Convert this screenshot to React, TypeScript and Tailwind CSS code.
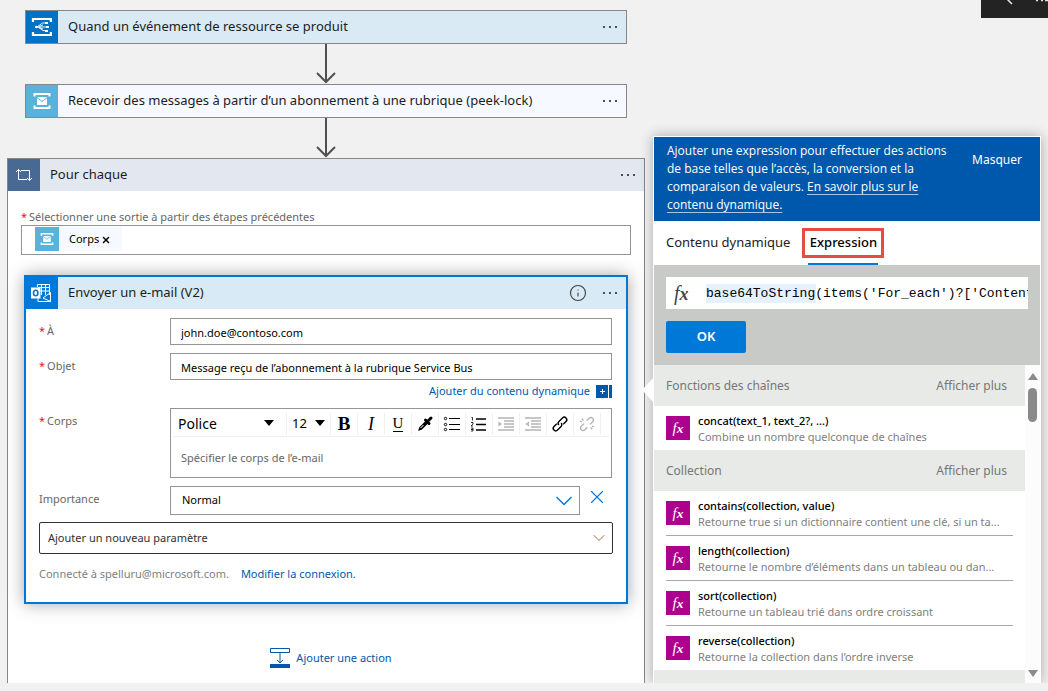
import React from "react";
import { ChevronDown, Info, X } from "lucide-react";

function ServiceBusIcon({ className }: { className: string }) {
  return (
    <svg viewBox="0 0 24 24" className={className} fill="none" aria-hidden="true">
      <path d="M4.500 7.500V5H19.500V7.500M4.500 16.500V19H19.500V16.500" stroke="#fff" strokeWidth="2" />
      <rect x="7" y="8" width="10" height="8" fill="#fff" />
      <path d="M7 8.500L12 12.500L17 8.500" stroke="#59b2d9" strokeWidth="1" />
    </svg>
  );
}

function EventGridIcon() {
  return (
    <svg viewBox="0 0 24 24" className="size-6" fill="none" stroke="#fff" aria-hidden="true">
      <path d="M4 7V4H20V7M4 17V20H20V17" strokeWidth="2" transform="translate(-1.500 0) scale(1.120 1)" />
      <path d="M5 12H16M7 12L12.500 8H16M8 12L13 15.500H16M9 11.500L13 10M9 12.500L13 14" strokeWidth="0.900" />
      <path d="M15 7h3v2h-3zM16 11h3v2h-3zM15 15h3v2h-3z" fill="#fff" stroke="none" />
      <circle cx="6.500" cy="12" r="1.300" fill="#fff" stroke="none" />
    </svg>
  );
}

function OutlookIcon() {
  return (
    <svg viewBox="0 0 24 24" className="size-6" fill="none" stroke="#fff" aria-hidden="true">
      <path d="M7.500 6V3.500H19.500V14" />
      <path d="M8 6.500H19.500M11.500 4V14M15.500 4V14M8 10H19.500" />
      <path d="M8 17V20.500H20.500V11.500L13 17L20.500 20.500" />
      <rect x="1" y="6.500" width="9.500" height="11" fill="#fff" stroke="none" />
      <ellipse cx="5.700" cy="12" rx="2.200" ry="2.700" stroke="#0078d7" strokeWidth="1.600" />
    </svg>
  );
}

function LoopIcon() {
  return (
    <svg viewBox="0 0 18 14" className="h-3.5 w-[18px]" fill="none" stroke="#fff" aria-hidden="true">
      <path d="M3.500 1.500V11.500H12M1 4L3.500 1.500L6 4M6 2.500H14.500V12.500M12 10L14.500 12.500L17 10" />
    </svg>
  );
}

function Arrow() {
  return (
    <div className="flex justify-center">
      <svg viewBox="0 0 20 40" className="h-10 w-5" fill="none" stroke="#505050" strokeWidth="2" aria-hidden="true">
        <path d="M10 0V38M1 29L10 38L19 29" />
      </svg>
    </div>
  );
}

function Dots() {
  return (
    <button aria-label="Menu" className="flex gap-1 p-1">
      <i className="size-0.5 bg-[#484f5c]" />
      <i className="size-0.5 bg-[#484f5c]" />
      <i className="size-0.5 bg-[#484f5c]" />
    </button>
  );
}

function StepCard({ icon, iconClass, title, className }: { icon: React.ReactNode; iconClass: string; title: string; className: string }) {
  return (
    <div className={`mx-[18px] flex h-[34px] items-center border border-[#8a8589] pr-[5px] ${className}`}>
      <span className={`flex h-full w-8 items-center justify-center ${iconClass}`}>{icon}</span>
      <h2 className="flex-1 pl-2.5 text-[13px]">{title}</h2>
      <Dots />
    </div>
  );
}

function Star() {
  return <span className="mr-0.5 text-[#e81123]">*</span>;
}

function Tool({ label, faded, children }: { label: string; faded?: boolean; children: React.ReactNode }) {
  return (
    <button
      aria-label={label}
      className={`flex h-[22px] w-[27px] items-center justify-center border-r border-[#f0f0f0] ${faded ? "text-[#b4b4b4]" : "text-black"}`}
    >
      {children}
    </button>
  );
}

function ListIcon({ kind }: { kind: "bullet" | "number" }) {
  return (
    <svg viewBox="0 0 18 16" className="h-4 w-[18px]" fill="none" stroke="currentColor" aria-hidden="true">
      {kind === "bullet" ? (
        <g>
          <path d="M6 2.500H17M6 8.500H17M6 13.500H17" />
          <circle cx="2.500" cy="2.500" r="1.200" />
          <circle cx="2.500" cy="8.500" r="1.200" />
          <circle cx="2.500" cy="13.500" r="1.200" />
        </g>
      ) : (
        <g>
          <path d="M6 3H16M6 8.500H16M6 14H16" strokeWidth="1.600" />
          <path d="M1.500 1.500H2.500V4.500M1 6.500H3V8L1 10H3M1 12H3V15H1M1 13.500H3" strokeWidth="0.800" />
        </g>
      )}
    </svg>
  );
}

function IndentIcon({ flip }: { flip?: boolean }) {
  return (
    <svg viewBox="0 0 18 16" className="h-4 w-[18px]" fill="none" stroke="currentColor" aria-hidden="true">
      <path d="M1 2H17M7 5H17M7 8H17M7 11H17M1 14H17" strokeWidth="1.400" />
      <path d={flip ? "M5 5.500V10.500L1.500 8Z" : "M1.500 5.500V10.500L5 8Z"} fill="currentColor" stroke="none" />
    </svg>
  );
}

function ChainIcon({ broken }: { broken?: boolean }) {
  return (
    <svg viewBox="0 0 18 18" className="size-[18px]" fill="none" stroke="currentColor" strokeWidth="1.400" aria-hidden="true">
      <g transform="rotate(-45 9 9)">
        {broken ? (
          <path d="M7 6.500H3.500A2.500 2.500 0 0 0 3.500 11.500H7M11 6.500H14.500A2.500 2.500 0 0 1 14.500 11.500H11M7 4L6 2M11 14L12 16M9 4V1.500M9 14V16.500" />
        ) : (
          <path d="M7 6.500H3A2.500 2.500 0 0 0 3 11.500H8A2.500 2.500 0 0 0 10.500 9M11 11.500H15A2.500 2.500 0 0 0 15 6.500H10A2.500 2.500 0 0 0 7.500 9" />
        )}
      </g>
    </svg>
  );
}

function Fx({ className }: { className: string }) {
  return (
    <span aria-hidden="true" className={`font-['Liberation_Serif',serif] leading-none italic ${className}`}>
      f<span className="text-[0.9em] font-bold">x</span>
    </span>
  );
}

function Group({ title }: { title: string }) {
  return (
    <div className="flex h-[41px] items-center justify-between bg-[#e8eae7] pt-px pr-[18px] pl-3 text-[12px] text-[#767676]">
      <h3>{title}</h3>
      <button>Afficher plus</button>
    </div>
  );
}

function FunctionList({ items }: { items: string[][] }) {
  return (
    <ul className="divide-y divide-[#a8a8a8] px-3">
      {items.map(([name, description]) => (
        <li key={name} className="flex h-[45px] items-start gap-2 pt-2.5 last:h-11">
          <span className="flex size-6 shrink-0 items-center justify-center bg-[#ad008c] text-white">
            <Fx className="text-[15px]" />
          </span>
          <div className="-mt-[3px] min-w-0 flex-1 text-[11px] leading-4">
            <p className="font-medium text-black">{name}</p>
            <p className="truncate text-[#808080]">{description}</p>
          </div>
        </li>
      ))}
    </ul>
  );
}

const stringFunctions = [["concat(text_1, text_2?, ...)", "Combine un nombre quelconque de chaînes"]];

const collectionFunctions = [
  ["contains(collection, value)", "Retourne true si un dictionnaire contient une clé, si un ta..."],
  ["length(collection)", "Retourne le nombre d’éléments dans un tableau ou dan..."],
  ["sort(collection)", "Retourne un tableau trié dans ordre croissant"],
  ["reverse(collection)", "Retourne la collection dans l’ordre inverse"],
];

function EmailCard() {
  const field = "h-[27px] w-full border border-[#949494] bg-white px-2.5 pt-0.5 text-[11px] text-black";
  const row = "grid grid-cols-[131px_1fr]";
  return (
    <section className="mx-4 mt-5 border-2 border-[#0078d7] bg-white text-[11px] text-[#666] shadow-[0_0_16px_rgba(0,0,0,0.35)]">
      <header className="flex h-8 items-center bg-[#d9eaf7] pr-[5px]">
        <span className="flex h-full w-8 items-center justify-center bg-[#0078d7]">
          <OutlookIcon />
        </span>
        <h2 className="flex-1 pl-2.5 text-[13px] text-[#1c1c1c]">Envoyer un e-mail (V2)</h2>
        <button aria-label="Informations" className="mr-3 text-[#404040]">
          <Info className="size-[18px]" strokeWidth={1.5} />
        </button>
        <Dots />
      </header>
      <div className="pt-[9px] pr-3.5 pb-[19px] pl-[13px]">
        <div className={row}>
          <label htmlFor="to" className="pt-[5px]">
            <Star />À
          </label>
          <input id="to" className={field} defaultValue="john.doe@contoso.com" />
        </div>
        <div className={`mt-2 ${row}`}>
          <label htmlFor="subject" className="pt-[5px]">
            <Star />Objet
          </label>
          <input id="subject" className={field} defaultValue="Message reçu de l’abonnement à la rubrique Service Bus" />
        </div>
        <div className="flex h-[22px] items-center justify-end">
          <a href="#contenu" className="flex items-center gap-1.5 text-[#0058ad]">
            Ajouter du contenu dynamique
            <svg viewBox="0 0 16 13" className="h-[13px] w-4" fill="#0058ad" aria-hidden="true">
              <path d="M0 0H12V13H0ZM13 0H16V13H13Z" />
              <path d="M6.500 4V9M4 6.500H9" stroke="#fff" />
            </svg>
          </a>
        </div>
        <div className={`mt-1.5 ${row}`}>
          <label htmlFor="body" className="pt-[5px]">
            <Star />Corps
          </label>
          <div className="border border-[#949494]">
            <div className="m-0.5 mb-0 flex h-[26px] items-center border-b border-[#f0f0f0] text-black">
              <div className="relative h-[22px] w-[114px] border-r border-[#f0f0f0]">
                <select aria-label="Police" className="h-full w-full appearance-none pl-[5px] text-[14px]">
                  <option>Police</option>
                </select>
                <i className="pointer-events-none absolute top-[7px] right-3 border-x-[5px] border-t-[6px] border-x-transparent border-t-black" />
              </div>
              <div className="relative h-[22px] w-11 border-r border-[#f0f0f0]">
                <select aria-label="Taille" className="h-full w-full appearance-none pl-[5px] text-[13px]">
                  <option>12</option>
                </select>
                <i className="pointer-events-none absolute top-[7px] right-[5px] border-x-[5px] border-t-[6px] border-x-transparent border-t-black" />
              </div>
              <Tool label="Gras">
                <b className="font-['Liberation_Serif',serif] text-[19px] leading-none">B</b>
              </Tool>
              <Tool label="Italique">
                <em className="font-['Liberation_Serif',serif] text-[18px] leading-none">I</em>
              </Tool>
              <Tool label="Souligné">
                <span className="border-b border-black font-['Liberation_Serif',serif] text-[15px] leading-[15px]">U</span>
              </Tool>
              <Tool label="Couleur">
                <svg viewBox="0 0 18 18" className="size-[18px]" aria-hidden="true">
                  <path d="M2 16L3.500 12L10 5.500L12.500 8L6 14.500Z" fill="currentColor" />
                  <path d="M4.500 13L7.500 10" stroke="#fff" />
                  <path d="M9.500 5L13 8.500M11.500 6.500L15 3" stroke="currentColor" strokeWidth="3" strokeLinecap="round" />
                </svg>
              </Tool>
              <Tool label="Liste à puces">
                <ListIcon kind="bullet" />
              </Tool>
              <Tool label="Liste numérotée">
                <ListIcon kind="number" />
              </Tool>
              <Tool label="Augmenter le retrait" faded>
                <IndentIcon />
              </Tool>
              <Tool label="Réduire le retrait" faded>
                <IndentIcon flip />
              </Tool>
              <Tool label="Lien">
                <ChainIcon />
              </Tool>
              <Tool label="Supprimer le lien" faded>
                <ChainIcon broken />
              </Tool>
            </div>
            <textarea
              id="body"
              placeholder="Spécifier le corps de l’e-mail"
              className="block h-10 w-full resize-none px-2.5 pt-[13px] text-[11px] leading-4 placeholder:text-[#666]"
            />
          </div>
        </div>
        <div className="mt-2 grid grid-cols-[131px_1fr_32px]">
          <label htmlFor="importance" className="pt-[5px]">
            Importance
          </label>
          <div className="relative">
            <select id="importance" className="h-[29px] w-full appearance-none border border-[#949494] pl-[11px] text-[11px] text-black">
              <option>Normal</option>
            </select>
            <svg viewBox="0 0 16 10" className="pointer-events-none absolute top-2.5 right-2 h-2.5 w-4" fill="none" stroke="#0078d7" strokeWidth="1.500" aria-hidden="true">
              <path d="M0.500 1L8 8.500L15.500 1" />
            </svg>
          </div>
          <button aria-label="Supprimer" className="flex h-[22px] items-center justify-center pl-0.5 text-[#0078d7]">
            <X className="size-[22px]" strokeWidth={1.2} />
          </button>
        </div>
        <div className="relative mt-[7px] -mr-px">
          <select aria-label="Ajouter un nouveau paramètre" className="block h-8 w-full appearance-none rounded-xs border border-[#323130] pl-2 text-[11px] text-[#323130]">
            <option>Ajouter un nouveau paramètre</option>
          </select>
          <ChevronDown className="pointer-events-none absolute top-1.5 right-1 size-5 text-[#9b6c48]" strokeWidth={1.2} />
        </div>
        <p className="mt-[11px] flex gap-3 leading-[18px] text-[#808080]">
          Connecté à spelluru@microsoft.com.
          <a href="#connexion" className="text-[#0058ad]">
            Modifier la connexion.
          </a>
        </p>
      </div>
    </section>
  );
}

function ExpressionPanel() {
  return (
    <aside className="relative mt-[136px] w-[388px] shrink-0 border border-b-0 border-white bg-white shadow-[0_0_12px_rgba(0,0,0,0.3)]">
      <svg viewBox="0 0 12 26" className="absolute top-[240px] -left-3 h-[26px] w-3" fill="#fff" aria-hidden="true">
        <path d="M12 0V26L0 13Z" />
      </svg>
      <div className="flex h-[84px] justify-between bg-[#0058ad] pt-[5px] pr-[18px] pl-[13px] text-[12px] leading-[18px] text-white">
        <p className="w-[292px] font-['Open_Sans',sans-serif]">
          Ajouter une expression pour effectuer des actions de base telles que l’accès, la conversion et la comparaison de valeurs.{" "}
          <a href="#aide" className="underline decoration-[#a9c4e4] underline-offset-[3px]">
            En savoir plus sur le contenu dynamique.
          </a>
        </p>
        <button className="mt-[9px] self-start">Masquer</button>
      </div>
      <div role="tablist" className="flex h-11 items-start gap-3 pt-[7px] pl-3 text-[13px] text-[#1c1c1c]">
        <button role="tab" aria-selected="false" className="h-[30px]">
          Contenu dynamique
        </button>
        <button role="tab" aria-selected="true" className="relative h-[30px] w-[82px] border-[3px] border-[#e94b43] font-medium text-black">
          Expression
          <i className="absolute -bottom-2.5 left-[3px] h-0.5 w-[70px] bg-[#0078d7]" />
        </button>
      </div>
      <div className="bg-[#c8cac7] p-3">
        <div className="flex h-8 items-center bg-white">
          <Fx className="w-10 pl-2 text-[20px] text-[#444]" />
          <div className="relative flex-1">
            <i className="absolute inset-y-0 left-0 w-[110px] bg-[#e5f1fd]" />
            <input
              aria-label="Expression"
              className="relative block w-full bg-transparent font-['Liberation_Mono',monospace] text-[13px] leading-[19px] text-black"
              defaultValue="base64ToString(items('For_each')?['Content"
            />
          </div>
        </div>
        <button className="mt-3 block h-8 w-20 rounded-xs bg-[#0078d7] text-[13px] font-semibold text-white">OK</button>
      </div>
      <div className="flex">
        <div className="min-w-0 flex-1">
          <Group title="Fonctions des chaînes" />
          <FunctionList items={stringFunctions} />
          <Group title="Collection" />
          <FunctionList items={collectionFunctions} />
          <div className="h-[13px] bg-[#e8eae7]" />
        </div>
        <div className="flex w-[15px] flex-col items-center bg-[#fcfcfc] pt-2 pb-1.5" aria-hidden="true">
          <i className="border-x-[5px] border-b-[7px] border-x-transparent border-b-[#8a8a8a]" />
          <i className="mt-2 h-[34px] w-[9px] rounded-full bg-[#8a8a8a]" />
          <i className="mt-auto border-x-[5px] border-t-[7px] border-x-transparent border-t-[#8a8a8a]" />
        </div>
      </div>
    </aside>
  );
}

export default function App() {
  return (
    <div className="relative min-h-screen bg-[#f1f1f1] pb-2 font-['Noto_Sans',sans-serif] text-[#1c1c1c]">
      <div className="absolute top-0 right-0 h-[18px] w-[67px] bg-[#232323]" aria-hidden="true">
        <svg viewBox="0 0 67 18" className="h-full w-full" fill="none" stroke="#e8e8e8" strokeWidth="1.500">
          <path d="M25 -2L31 4M55 0.500H57M60 0.500H62M64 0.500H67" />
        </svg>
      </div>
      <main className="flex items-stretch gap-2 overflow-hidden px-[7px]">
        <div className="flex min-w-0 flex-1 flex-col pt-2.5">
          <StepCard icon={<EventGridIcon />} iconClass="bg-[#0072c6]" title="Quand un événement de ressource se produit" className="bg-[#d9eaf5]" />
          <Arrow />
          <StepCard
            icon={<ServiceBusIcon className="size-6" />}
            iconClass="bg-[#59b2d9]"
            title="Recevoir des messages à partir d’un abonnement à une rubrique (peek-lock)"
            className="bg-[#f6f9ff]"
          />
          <Arrow />
          <section className="flex flex-1 flex-col border border-b-0 border-[#8a8589] bg-white">
            <header className="flex h-8 items-center bg-[#e3e7ef] pr-[5px]">
              <span className="flex h-full w-8 items-center justify-center bg-[#486991]">
                <LoopIcon />
              </span>
              <h2 className="flex-1 pl-2.5 text-[13px]">Pour chaque</h2>
              <Dots />
            </header>
            <div className="mx-[13px] mt-[18px]">
              <label htmlFor="output" className="block text-[11px] leading-4 text-[#666]">
                <Star />
                Sélectionner une sortie à partir des étapes précédentes
              </label>
              <div className="flex h-[30px] border border-[#949494] py-px pl-[13px]">
                <span className="flex h-6 w-[87px] items-center bg-[#f6f9ff] text-[11px] text-black">
                  <span className="flex size-6 items-center justify-center bg-[#59b2d9]">
                    <ServiceBusIcon className="size-[18px]" />
                  </span>
                  <span className="pl-2.5">Corps</span>
                  <button aria-label="Retirer Corps" className="pt-0.5 pl-0.5">
                    <X className="size-2.5" strokeWidth={3.5} />
                  </button>
                </span>
                <input id="output" className="min-w-0 flex-1" />
              </div>
            </div>
            <EmailCard />
            <div className="flex justify-center pt-[42px] pb-[13px] pl-2.5">
              <button className="flex items-center gap-1.5 text-[11px] leading-6 text-[#0058ad]">
                <svg viewBox="0 0 20 20" className="size-5" fill="none" stroke="#0058ad" aria-hidden="true">
                  <path d="M0.500 0.500H19.500V4.500H0.500ZM10 5V15M7 12L10 15L13 12" />
                  <path d="M0 18H20" strokeWidth="4" />
                </svg>
                Ajouter une action
              </button>
            </div>
          </section>
        </div>
        <ExpressionPanel />
      </main>
    </div>
  );
}
